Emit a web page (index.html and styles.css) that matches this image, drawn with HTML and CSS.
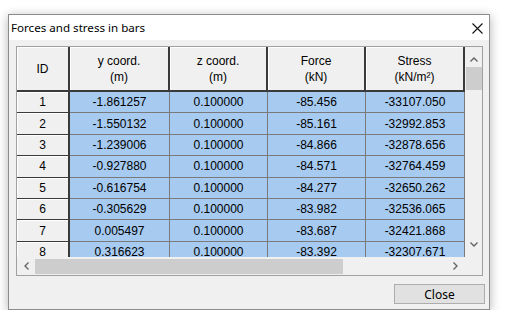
FILE: index.html
```html
<!DOCTYPE html>
<html lang="en">
<head>
    <meta charset="UTF-8">
    <title>Forces and stress in bars</title>
    <link rel="stylesheet" href="styles.css">
</head>
<body>
    <div class="window">
        <div class="titlebar">
            <span class="title">Forces and stress in bars</span>
            <svg class="close-x" width="11" height="11" viewBox="0 0 11 11">
                <path d="M0.5 0.5 L10.5 10.5 M10.5 0.5 L0.5 10.5" stroke="#111" stroke-width="1.1" fill="none"/>
            </svg>
        </div>

        <div class="content">
            <div class="grid">
                <div class="viewport">
                    <table class="results">
                        <colgroup>
                            <col style="width: 53px">
                            <col style="width: 100px">
                            <col style="width: 98px">
                            <col style="width: 98px">
                            <col style="width: 99px">
                        </colgroup>
                        <thead>
                            <tr>
                                <th>ID</th>
                                <th>y coord.<br>(m)</th>
                                <th>z coord.<br>(m)</th>
                                <th>Force<br>(kN)</th>
                                <th>Stress<br>(kN/m²)</th>
                            </tr>
                        </thead>
                        <tbody>
                            <tr><td class="rowhead">1</td><td>-1.861257</td><td>0.100000</td><td>-85.456</td><td>-33107.050</td></tr>
                            <tr><td class="rowhead">2</td><td>-1.550132</td><td>0.100000</td><td>-85.161</td><td>-32992.853</td></tr>
                            <tr><td class="rowhead">3</td><td>-1.239006</td><td>0.100000</td><td>-84.866</td><td>-32878.656</td></tr>
                            <tr><td class="rowhead">4</td><td>-0.927880</td><td>0.100000</td><td>-84.571</td><td>-32764.459</td></tr>
                            <tr><td class="rowhead">5</td><td>-0.616754</td><td>0.100000</td><td>-84.277</td><td>-32650.262</td></tr>
                            <tr><td class="rowhead">6</td><td>-0.305629</td><td>0.100000</td><td>-83.982</td><td>-32536.065</td></tr>
                            <tr><td class="rowhead">7</td><td>0.005497</td><td>0.100000</td><td>-83.687</td><td>-32421.868</td></tr>
                            <tr><td class="rowhead">8</td><td>0.316623</td><td>0.100000</td><td>-83.392</td><td>-32307.671</td></tr>
                        </tbody>
                    </table>
                </div>

                <!-- vertical scrollbar -->
                <div class="vscroll">
                    <div class="arrow up">
                        <svg width="8" height="5" viewBox="0 0 8 5"><path d="M0.5 4.5 L4 1 L7.5 4.5" stroke="#606060" stroke-width="1.3" fill="none"/></svg>
                    </div>
                    <div class="vthumb"></div>
                    <div class="arrow down">
                        <svg width="8" height="5" viewBox="0 0 8 5"><path d="M0.5 0.5 L4 4 L7.5 0.5" stroke="#606060" stroke-width="1.3" fill="none"/></svg>
                    </div>
                </div>

                <!-- horizontal scrollbar -->
                <div class="hscroll">
                    <div class="arrow left">
                        <svg width="5" height="8" viewBox="0 0 5 8"><path d="M4.5 0.5 L1 4 L4.5 7.5" stroke="#606060" stroke-width="1.3" fill="none"/></svg>
                    </div>
                    <div class="hthumb"></div>
                    <div class="arrow right">
                        <svg width="5" height="8" viewBox="0 0 5 8"><path d="M0.5 0.5 L4 4 L0.5 7.5" stroke="#606060" stroke-width="1.3" fill="none"/></svg>
                    </div>
                </div>
                <div class="corner"></div>
            </div>

            <div class="buttons">
                <button class="btn">Close</button>
            </div>
        </div>
    </div>
</body>
</html>
```

FILE: styles.css
```css
body {
    margin: 0;
    background: #ffffff;
    font-family: "Liberation Sans", Arial, sans-serif;
}
.window {
    box-sizing: border-box;
    width: 482px;
    height: 296px;
    margin: 14px 0 0 8px;
    border: 1px solid #8c8c8c;
    box-shadow: 0 2px 10px rgba(0, 0, 0, 0.3);
    display: flex;
    flex-direction: column;
    background: #f0f0f0;
}
.titlebar {
    height: 25px;
    background: #ffffff;
    display: flex;
    align-items: center;
    justify-content: space-between;
    padding: 0 6px 0 2px;
}
.title {
    font-family: "Noto Sans", "Open Sans", sans-serif;
    font-size: 11.6px;
    color: #000;
}
.close-x {
    margin-top: 2px;
}
.content {
    flex: 1;
    padding: 6px 4px 5px 7px;
    display: flex;
    flex-direction: column;
}
.grid {
    box-sizing: border-box;
    width: 467px;
    height: 230px;
    border: 1px solid #a0a0a0;
    display: grid;
    grid-template-columns: 448px 17px;
    grid-template-rows: 210px 18px;
    background: #f0f0f0;
}
.viewport {
    overflow: hidden;
    background: #ffffff;
}
.results {
    border-collapse: separate;
    border-spacing: 0;
    table-layout: fixed;
    width: 448px;
    font-size: 12px;
    color: #000;
}
.results th {
    height: 43px;
    padding: 0;
    font-weight: normal;
    line-height: 16px;
    background: #f0f0f0;
    border-right: 2px solid #3a3a3a;
    border-bottom: 2px solid #3a3a3a;
    box-shadow: inset 1px 1px 0 #ffffff;
    text-align: center;
}
.results td {
    height: 20.4px;
    padding: 0;
    text-align: center;
    background: #a6caf0;
    border-right: 1px solid #7a7a7a;
    border-bottom: 1px solid #7a7a7a;
}
.results td.rowhead {
    background: #f0f0f0;
    border-right: 2px solid #3a3a3a;
    border-bottom: 1px solid #3a3a3a;
    box-shadow: inset 1px 1px 0 #ffffff;
}
.vscroll {
    display: flex;
    flex-direction: column;
    align-items: center;
}
.arrow {
    display: flex;
    align-items: center;
    justify-content: center;
}
.arrow.up {
    height: 20px;
    width: 17px;
    padding-top: 4px;
    box-sizing: border-box;
}
.vthumb {
    width: 16px;
    height: 23px;
    background: #cdcdcd;
}
.arrow.down {
    margin-top: auto;
    height: 22px;
    width: 17px;
    padding-bottom: 4px;
    box-sizing: border-box;
}
.hscroll {
    display: flex;
    align-items: center;
}
.arrow.left {
    width: 18px;
    height: 18px;
}
.hthumb {
    width: 308px;
    height: 15px;
    background: #cdcdcd;
}
.arrow.right {
    margin-left: auto;
    width: 20px;
    height: 18px;
}
.corner {
    background: #f0f0f0;
}
.buttons {
    display: flex;
    justify-content: flex-end;
    margin-top: 8px;
}
.btn {
    box-sizing: border-box;
    width: 91px;
    height: 20px;
    padding: 0;
    background: #e1e1e1;
    border: 1px solid #adadad;
    font-family: "Noto Sans", "Open Sans", sans-serif;
    font-size: 12px;
    color: #000;
}
```
